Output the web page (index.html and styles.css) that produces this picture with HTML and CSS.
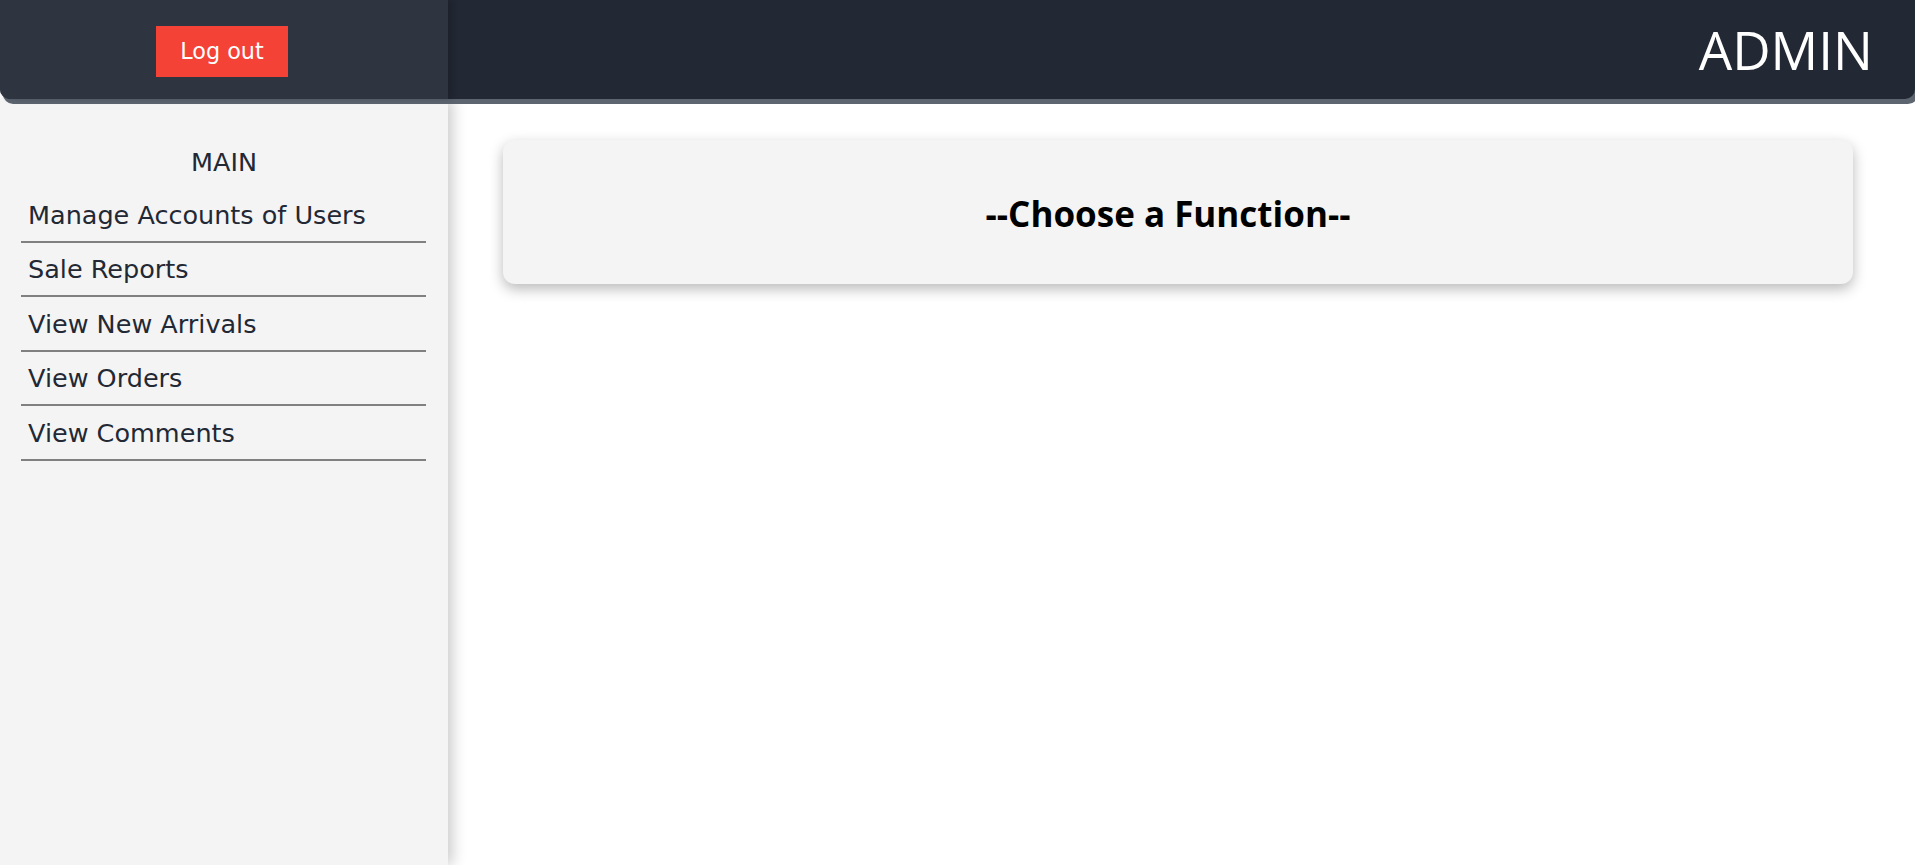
FILE: index.html
```html
<!DOCTYPE html>
<html lang="en">
<head>
<meta charset="utf-8">
<title>Admin</title>
<link rel="stylesheet" href="styles.css">
</head>
<body>
<header class="topbar">
  <div class="topbar-left">
    <button class="logout">Log out</button>
  </div>
  <div class="topbar-right">
    <span class="role">ADMIN</span>
  </div>
</header>
<div class="layout">
  <nav class="sidebar">
    <div class="sidebar-title">MAIN</div>
    <ul class="menu">
      <li class="menu-item">Manage Accounts of Users</li>
      <li class="menu-item">Sale Reports</li>
      <li class="menu-item">View New Arrivals</li>
      <li class="menu-item">View Orders</li>
      <li class="menu-item">View Comments</li>
    </ul>
  </nav>
  <main class="content">
    <section class="card">
      <h2 class="card-title">--Choose a Function--</h2>
    </section>
  </main>
</div>
</body>
</html>
```
FILE: styles.css
```css
html, body {
  margin: 0;
  padding: 0;
  height: 100%;
}
body {
  display: flex;
  flex-direction: column;
  background: #ffffff;
  overflow: hidden;
}
.topbar {
  position: relative;
  z-index: 3;
  display: flex;
  height: 99px;
  flex: 0 0 99px;
  border-radius: 0 0 10px 10px;
  box-shadow: 3px 5px 0 #5c6570;
  background: #222834;
}
.topbar-left {
  width: 448px;
  flex: 0 0 448px;
  display: flex;
  align-items: center;
  justify-content: center;
  padding-right: 4px;
  box-sizing: border-box;
  background: #2f3540;
  border-bottom-left-radius: 10px;
  box-shadow: 4px 0 6px rgba(0, 0, 0, 0.18);
}
.logout {
  margin-top: 4px;
  height: 51px;
  padding: 0 24px;
  border: none;
  background: #f44336;
  color: #ffffff;
  font-family: "DejaVu Sans", Verdana, sans-serif;
  font-size: 22.3px;
  line-height: 51px;
  cursor: pointer;
}
.topbar-right {
  flex: 1;
  display: flex;
  align-items: center;
  justify-content: flex-end;
  padding-right: 42px;
}
.role {
  font-family: "Open Sans", "Segoe UI", sans-serif;
  font-size: 53px;
  line-height: 53px;
  color: #ffffff;
}
.layout {
  flex: 1;
  display: flex;
  min-height: 0;
}
.sidebar {
  position: relative;
  z-index: 1;
  width: 448px;
  flex: 0 0 448px;
  background: #f4f4f4;
  box-shadow: 4px 0 14px rgba(0, 0, 0, 0.22);
  padding-top: 48px;
  box-sizing: border-box;
  font-family: "DejaVu Sans", Verdana, sans-serif;
  font-size: 25.5px;
  color: #222834;
}
.sidebar-title {
  text-align: center;
  line-height: 30px;
  margin-bottom: 11px;
}
.menu {
  list-style: none;
  margin: 0 22px 0 21px;
  padding: 0;
}
.menu-item {
  line-height: 30px;
  padding: 11.5px 6px 11px 7px;
  border-bottom: 2px solid #808080;
  white-space: nowrap;
}
.content {
  flex: 1;
  padding-top: 41px;
}
.card {
  margin: 0 62px 0 55px;
  height: 144px;
  border-radius: 12px;
  background: #f4f4f4;
  box-shadow: 0 5px 14px rgba(0, 0, 0, 0.28);
  display: flex;
  align-items: center;
  justify-content: center;
  padding-right: 20px;
  padding-top: 2px;
  box-sizing: border-box;
}
.card-title {
  margin: 0;
  font-family: "Open Sans", "Segoe UI", sans-serif;
  font-weight: 700;
  font-size: 35px;
  color: #000000;
}
```
